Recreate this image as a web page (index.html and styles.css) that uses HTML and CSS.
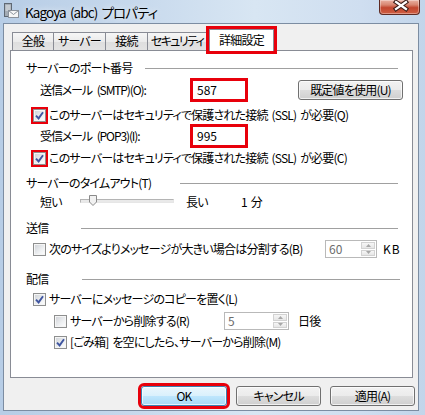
FILE: index.html
```html
<!DOCTYPE html>
<html lang="ja">
<head>
<meta charset="utf-8">
<title>Kagoya (abc) プロパティ</title>
<link rel="stylesheet" href="styles.css">
</head>
<body>
<div class="window">
  <div class="titlebar">
    <svg class="app-icon" viewBox="0 0 16 16" width="16" height="16">
      <rect x="1.5" y="1.5" width="7" height="13" fill="#a3abb4" stroke="#5f6873"/>
      <line x1="2.5" y1="4" x2="7.5" y2="4" stroke="#e6e9ec"/>
      <line x1="2.5" y1="6" x2="7.5" y2="6" stroke="#e6e9ec"/>
      <line x1="2.5" y1="8" x2="7.5" y2="8" stroke="#e6e9ec"/>
      <rect x="5.5" y="8.5" width="10" height="7" fill="#f6f6f6" stroke="#8b929b"/>
      <polyline points="5.5,8.5 10.5,12.5 15.5,8.5" fill="none" stroke="#8b929b"/>
    </svg>
    <span class="title">Kagoya (abc) プロパティ</span>
    <div class="close">
      <svg viewBox="0 0 41 14" width="41" height="14">
        <path d="M16 2 L26 9 M26 2 L16 9" stroke="#3b1d18" stroke-width="4.4" stroke-linecap="square"/>
        <path d="M16 2 L26 9 M26 2 L16 9" stroke="#ffffff" stroke-width="2.2" stroke-linecap="square"/>
      </svg>
    </div>
  </div>

  <div class="client">
    <div class="tabs">
      <div class="tab tab-1">全般</div>
      <div class="tab tab-2">サーバー</div>
      <div class="tab tab-3">接続</div>
      <div class="tab tab-4">セキュリティ</div>
      <div class="tab tab-active marked-3">詳細設定</div>
    </div>

    <div class="panel">
      <div class="group-head">
        <span class="gh-label gh-w1">サーバーのポート番号</span><span class="gh-line"></span>
      </div>

      <div class="row row-field">
        <span class="field-label">送信メール (SMTP)(O):</span>
        <div class="textbox marked-3">587</div>
        <div class="btn btn-reset">既定値を使用(U)</div>
      </div>

      <div class="row row-cb1">
        <span class="cb marked-2"><svg viewBox="0 0 9 9"><path d="M1 4.6 L3.6 7.4 L8 1.2" fill="none" stroke="#3f55a0" stroke-width="1.9"/></svg></span>
        <span class="cb-text">このサーバーはセキュリティで保護された接続 (SSL) が必要(Q)</span>
      </div>

      <div class="row row-field row-pop">
        <span class="field-label">受信メール (POP3)(I):</span>
        <div class="textbox marked-3">995</div>
      </div>

      <div class="row row-cb2">
        <span class="cb marked-2"><svg viewBox="0 0 9 9"><path d="M1 4.6 L3.6 7.4 L8 1.2" fill="none" stroke="#3f55a0" stroke-width="1.9"/></svg></span>
        <span class="cb-text">このサーバーはセキュリティで保護された接続 (SSL) が必要(C)</span>
      </div>

      <div class="group-head gh-2">
        <span class="gh-label gh-w2">サーバーのタイムアウト(T)</span><span class="gh-line"></span>
      </div>

      <div class="row row-slider">
        <span class="sl-short">短い</span>
        <div class="track">
          <svg class="thumb" viewBox="0 0 8 11" width="8" height="11">
            <path d="M0.5 0.5 H7.5 V7 L4 10.5 L0.5 7 Z" fill="#f1f1f1" stroke="#8a8a8a"/>
          </svg>
        </div>
        <span class="sl-long">長い</span>
        <span>1 分</span>
      </div>

      <div class="group-head gh-3">
        <span class="gh-label gh-w3">送信</span><span class="gh-line"></span>
      </div>

      <div class="row row-cb3">
        <span class="cb"></span>
        <span class="cb-text cb-w3">次のサイズよりメッセージが大きい場合は分割する(B)</span>
        <div class="spin spin-kb">
          <span class="spin-val">60</span>
          <div class="spin-btns">
            <span><svg viewBox="0 0 5 3" width="5" height="3"><path d="M0 3 L2.5 0 L5 3 Z" fill="#a7a7a7"/></svg></span>
            <span><svg viewBox="0 0 5 3" width="5" height="3"><path d="M0 0 L2.5 3 L5 0 Z" fill="#a7a7a7"/></svg></span>
          </div>
        </div>
        <span class="unit-kb">KB</span>
      </div>

      <div class="group-head gh-4">
        <span class="gh-label gh-w4">配信</span><span class="gh-line gh-line-wide"></span>
      </div>

      <div class="row row-cb4">
        <span class="cb"><svg viewBox="0 0 9 9"><path d="M1 4.6 L3.6 7.4 L8 1.2" fill="none" stroke="#3f55a0" stroke-width="1.9"/></svg></span>
        <span class="cb-text">サーバーにメッセージのコピーを置く(L)</span>
      </div>

      <div class="row row-cb5">
        <span class="cb cb-indent"></span>
        <span class="cb-text cb-w5">サーバーから削除する(R)</span>
        <div class="spin spin-days">
          <span class="spin-val">5</span>
          <div class="spin-btns">
            <span><svg viewBox="0 0 5 3" width="5" height="3"><path d="M0 3 L2.5 0 L5 3 Z" fill="#a7a7a7"/></svg></span>
            <span><svg viewBox="0 0 5 3" width="5" height="3"><path d="M0 0 L2.5 3 L5 0 Z" fill="#a7a7a7"/></svg></span>
          </div>
        </div>
        <span class="unit-days">日後</span>
      </div>

      <div class="row row-cb6">
        <span class="cb cb-indent"><svg viewBox="0 0 9 9"><path d="M1 4.6 L3.6 7.4 L8 1.2" fill="none" stroke="#3f55a0" stroke-width="1.9"/></svg></span>
        <span class="cb-text">[ごみ箱] を空にしたら、サーバーから削除(M)</span>
      </div>
    </div>

    <div class="actions">
      <div class="btn btn-ok marked-2o">OK</div>
      <div class="btn btn-cancel">キャンセル</div>
      <div class="btn btn-apply">適用(A)</div>
    </div>
  </div>
</div>
</body>
</html>
```

FILE: styles.css
```css
* { box-sizing: border-box; }
html, body { margin: 0; padding: 0; }
body {
  width: 425px;
  height: 415px;
  overflow: hidden;
  font-family: "Noto Sans CJK JP", "Noto Sans", sans-serif;
  font-size: 12px;
  line-height: 16px;
  color: #000;
  font-feature-settings: "palt";
  letter-spacing: -0.8px;
  word-spacing: 2px;
  white-space: nowrap;
}

.window {
  width: 425px;
  height: 415px;
  display: flex;
  flex-direction: column;
  background: linear-gradient(90deg, #b7cde6 0%, #c6d8ec 30%, #d8e6f3 60%, #cfdef0 85%, #c2d5ea 100%);
}

/* title bar */
.titlebar {
  height: 23px;
  flex: none;
  display: flex;
  align-items: flex-start;
}
.app-icon { flex: none; margin: 2px 0 0 3px; }
.title {
  margin: 3px 0 0 6px;
  font-size: 13.5px;
  line-height: 18px;
  letter-spacing: -0.9px;
  word-spacing: 2px;
  text-shadow: 0 0 6px rgba(255, 255, 255, 0.9);
}
.close {
  margin-left: auto;
  margin-right: 5px;
  width: 41px;
  height: 15px;
  border: 1px solid #5e2a22;
  border-top: none;
  border-radius: 0 0 4px 4px;
  background: linear-gradient(#eab1a2 0%, #d88670 35%, #c2462e 55%, #cf5f43 100%);
  box-shadow: inset 0 0 0 1px rgba(255, 255, 255, 0.35);
}
.close svg { display: block; }

/* client area */
.client {
  flex: 1;
  margin: 0 6px 4px 3px;
  border: 1px solid #7c8da2;
  background: #f0f0f0;
  display: flex;
  flex-direction: column;
  padding: 5px 5px 0 6px;
}

/* tabs */
.tabs {
  height: 21px;
  flex: none;
  display: flex;
  align-items: flex-end;
  padding-left: 2px;
  position: relative;
  z-index: 1;
}
.tab {
  flex: none;
  height: 18px;
  border: 1px solid #898c95;
  border-bottom: none;
  background: linear-gradient(#f6f6f6 0%, #ebebeb 50%, #dedede 51%, #e3e3e3 100%);
  text-align: center;
  line-height: 16px;
  margin-left: -1px;
}
.tab-1 { width: 42px; margin-left: 0; }
.tab-2 { width: 53px; }
.tab-3 { width: 43px; }
.tab-4 { width: 62px; letter-spacing: -1.6px; text-indent: -2px; }
.tab-active {
  width: 65px;
  height: 22px;
  margin-left: 0;
  margin-bottom: -1px;
  background: #fff;
  line-height: 20px;
}

.marked-3 { outline: 3px solid #e8000b; outline-offset: -1px; }
.marked-2 { outline: 2px solid #e8000b; outline-offset: 0; }
.marked-2o { outline: 3px solid #e8000b; outline-offset: 0; }
.tab-active.marked-3 { outline-offset: 0; }

/* panel */
.panel {
  flex: none;
  height: 328px;
  border: 1px solid #898c95;
  background: #fff;
  padding: 8px 14px 0 15px;
  display: flex;
  flex-direction: column;
}

.row { display: flex; align-items: center; flex: none; }
.row > * { flex: none; }

.group-head { display: flex; align-items: center; height: 18px; flex: none; }
.gh-label { flex: none; }
.gh-w1 { width: 119px; }
.gh-w2 { width: 154px; }
.gh-w3 { width: 55px; }
.gh-w4 { width: 56px; }
.gh-line { flex: 1; height: 1px; background: #a0a0a0; }
.gh-line-wide { margin-right: -2px; }
.gh-2 { margin-top: 8px; }
.gh-3 { margin-top: 8px; }
.gh-4 { margin-top: 12px; }

.row-field { height: 22px; margin-top: 2px; }
.field-label { margin-left: 14px; width: 152px; letter-spacing: -1.1px; word-spacing: 3px; }
.textbox {
  width: 54px;
  height: 20px;
  border: 1px solid #abadb3;
  background: #fff;
  padding-left: 4px;
  line-height: 18px;
  letter-spacing: 0;
}
.btn {
  height: 20px;
  border: 1px solid #707070;
  border-radius: 3px;
  background: linear-gradient(#f2f2f2 0%, #ebebeb 50%, #dddddd 51%, #cfcfcf 100%);
  box-shadow: inset 0 0 0 1px rgba(255, 255, 255, 0.7);
  text-align: center;
  line-height: 18px;
}
.btn-reset { width: 105px; margin-left: 52px; }

.row-cb1 { height: 16px; margin-top: 6px; }
.row-pop { margin-top: 2px; }
.row-cb2 { height: 16px; margin-top: 3px; }

.cb {
  width: 13px;
  height: 13px;
  margin-left: 7px;
  border: 1px solid #8e8f8f;
  background: linear-gradient(135deg, #cdd0d5 0%, #eef0f2 60%, #ffffff 100%);
  box-shadow: inset 0 0 0 1px #f5f5f5;
  display: flex;
  align-items: center;
  justify-content: center;
}
.cb svg { width: 9px; height: 9px; display: block; }
.cb-indent { margin-left: 28px; }
.cb-text { margin-left: 3px; }
.cb-w3 { width: 276px; }
.cb-w5 { width: 154px; }

/* slider */
.row-slider { height: 18px; margin-top: 1px; }
.sl-short { margin-left: 14px; width: 40px; }
.track {
  position: relative;
  width: 94px;
  height: 4px;
  margin-top: -3px;
  border: 1px solid #b4b4b4;
  border-bottom-color: #e6e6e6;
  border-right-color: #e6e6e6;
  background: #e9e9e9;
}
.thumb { position: absolute; left: 8px; top: -5px; }
.sl-long { margin-left: 12px; width: 55px; }

/* spin boxes */
.row-cb3 { height: 18px; margin-top: 3px; }
.spin {
  height: 18px;
  border: 1px solid #b9b9b9;
  background: #fff;
  color: #6d6d6d;
  display: flex;
  padding: 1px;
  letter-spacing: 0;
}
.spin-kb { width: 52px; }
.spin-days { width: 65px; }
.spin-val { flex: 1; padding-left: 2px; line-height: 14px; }
.spin-btns { width: 14px; display: flex; flex-direction: column; gap: 1px; }
.spin-btns span {
  flex: 1;
  border: 1px solid #d2d2d2;
  background: linear-gradient(#f6f6f6, #e6e6e6);
  display: flex;
  align-items: center;
  justify-content: center;
}
.spin-btns svg { display: block; }
.unit-kb { margin-left: 6px; letter-spacing: 1px; }
.unit-days { margin-left: 9px; }

.row-cb4 { height: 16px; margin-top: 3px; }
.row-cb5 { height: 18px; margin-top: 5px; }
.row-cb6 { height: 16px; margin-top: 4px; }

/* bottom buttons */
.actions {
  display: flex;
  justify-content: flex-end;
  gap: 9px;
  margin-top: 8px;
  margin-right: -2px;
  flex: none;
}
.btn-ok {
  width: 86px;
  border-color: #3c7fb1;
  background: linear-gradient(#eaf6fd 0%, #d9f0fc 50%, #bee6fd 51%, #a7d9f5 100%);
}
.btn-cancel { width: 85px; }
.btn-apply { width: 85px; }
```
